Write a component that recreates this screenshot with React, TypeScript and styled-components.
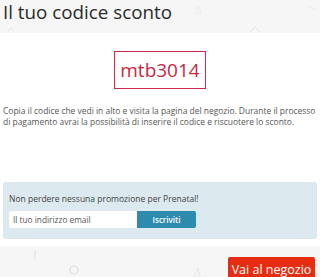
import React from 'react';
import styled, { createGlobalStyle } from 'styled-components';

const GlobalStyle = createGlobalStyle`
  html, body {
    margin: 0;
    padding: 0;
    background: #ffffff;
    font-family: "Open Sans", "Liberation Sans", sans-serif;
  }
`;

// pattern bands (header / footer)
const Band = styled.div<{ $h: number; $top?: number }>`
  position: relative;
  height: ${p => p.$h}px;
  margin-top: ${p => p.$top || 0}px;
  background: #f6f6f6;
  overflow: hidden;
`;

const Deco = styled.svg`
  position: absolute;
  left: 0;
  top: 0;
  width: 320px;
  height: 100%;
  pointer-events: none;
`;

const Title = styled.h1`
  position: relative;
  margin: 0;
  padding: 0 0 0 3px;
  font-size: 18.8px;
  font-weight: 400;
  line-height: 25px;
  color: #2b2b2b;
`;

const Body = styled.div`
  background: #ffffff;
  padding: 18px 3px 0 3px;
`;

const CodeBox = styled.div`
  width: 90px;
  height: 36px;
  margin: 0 auto;
  border: 1px solid #d2274a;
  display: flex;
  align-items: center;
  justify-content: center;
  color: #c8283f;
  font-size: 19px;
`;

const Info = styled.p`
  margin: 16px 0 0;
  font-size: 8.45px;
  line-height: 11px;
  color: #555555;
`;

const Newsletter = styled.div`
  margin-top: 55px;
  padding: 11px 6px 11px;
  background: #dce9ef;
  border-radius: 2px;
`;

const NewsText = styled.div`
  font-size: 8.5px;
  line-height: 12px;
  color: #444444;
`;

const Form = styled.div`
  display: flex;
  margin-top: 6px;
`;

const Email = styled.div`
  width: 124px;
  height: 17px;
  padding-left: 4px;
  background: #ffffff;
  border-radius: 2px 0 0 2px;
  display: flex;
  align-items: center;
  font-size: 8.3px;
  color: #555555;
`;

const Subscribe = styled.button`
  width: 59px;
  height: 17px;
  border: 0;
  padding: 0;
  background: #2d8cae;
  border-radius: 0 2px 2px 0;
  color: #ffffff;
  font-family: inherit;
  font-size: 8px;
  font-weight: 600;
`;

const FooterRow = styled.div`
  position: relative;
  display: flex;
  justify-content: flex-end;
  padding: 11px 5px 0 0;
`;

const ShopButton = styled.button`
  width: 87px;
  height: 24px;
  border: 0;
  padding: 0;
  border-radius: 2px 2px 0 0;
  background: #e62d12;
  color: #ffffff;
  font-family: inherit;
  font-size: 12.5px;
  text-align: center;
`;

export default function App(): JSX.Element {
  return (
    <>
      <GlobalStyle />
      <Band $h={33}>
        <Deco viewBox="0 0 320 33">
          <path d="M8 31 L11 28 L14 31" fill="none" stroke="#e6e6e6" strokeWidth="1" />
          <path d="M250 32 L255 27 L260 32" fill="none" stroke="#e6e6e6" strokeWidth="1" />
          <path d="M198 6 L196 14 L201 14 Z" fill="none" stroke="#ececec" strokeWidth="1" />
          <path d="M308 6 L316 10" fill="none" stroke="#eaeaea" strokeWidth="1" />
        </Deco>
        <Title>Il tuo codice sconto</Title>
      </Band>
      <Body>
        <CodeBox>mtb3014</CodeBox>
        <Info>
          Copia il codice che vedi in alto e visita la pagina del negozio. Durante il processo di pagamento avrai la possibilità di inserire il codice e riscuotere lo sconto.
        </Info>
        <Newsletter>
          <NewsText>Non perdere nessuna promozione per Prenatal!</NewsText>
          <Form>
            <Email>Il tuo indirizzo email</Email>
            <Subscribe>Iscriviti</Subscribe>
          </Form>
        </Newsletter>
      </Body>
      <Band $h={31} $top={7}>
        <Deco viewBox="0 0 320 31">
          <path d="M35 4 L35 14" fill="none" stroke="#dedede" strokeWidth="1" />
          <circle cx="74" cy="24" r="4" fill="none" stroke="#dcdcdc" strokeWidth="1.2" />
          <path d="M198 22 L194 31 M198 22 L200 31" fill="none" stroke="#e4e4e4" strokeWidth="1" />
        </Deco>
        <FooterRow>
          <ShopButton>Vai al negozio</ShopButton>
        </FooterRow>
      </Band>
    </>
  );
}
